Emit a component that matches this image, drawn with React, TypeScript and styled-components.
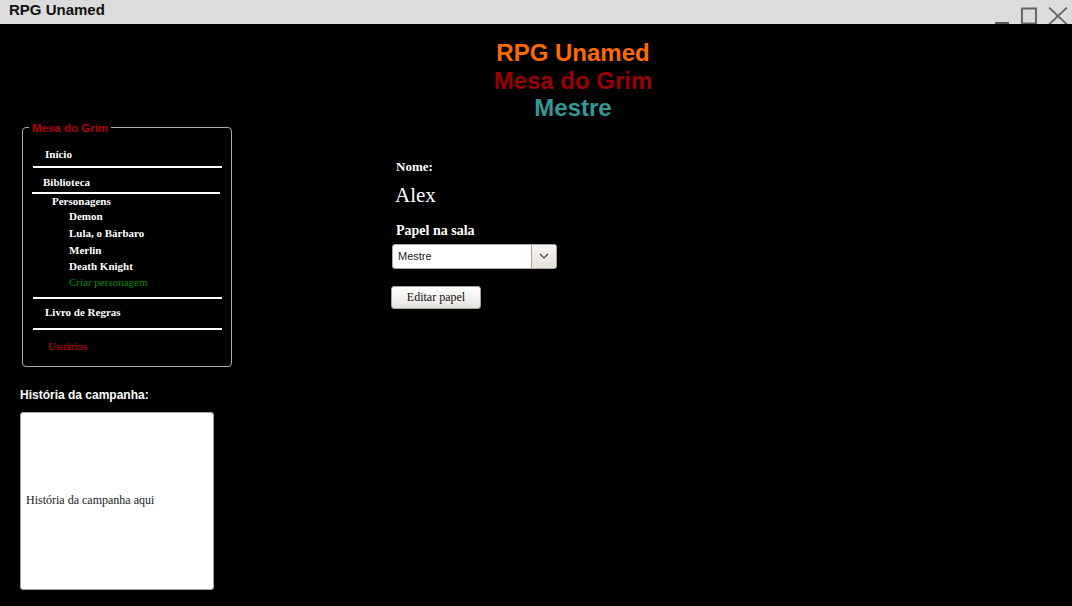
import React from "react";
import styled, { createGlobalStyle } from "styled-components";

const GlobalStyle = createGlobalStyle`
  html, body { margin: 0; padding: 0; background: #000; }
  body { font-family: "Liberation Serif", serif; }
  * { box-sizing: border-box; }
`;

const Window = styled.div`
  width: 1072px;
  height: 606px;
  display: flex;
  flex-direction: column;
  background: #000;
  overflow: hidden;
`;

const TitleBar = styled.div`
  height: 24px;
  flex: none;
  background: #dcdcdc;
  display: flex;
  align-items: flex-start;
  justify-content: space-between;
  overflow: hidden;
`;

const TitleText = styled.span`
  font-family: "Liberation Sans", Arial, sans-serif;
  font-weight: bold;
  font-size: 15px;
  line-height: 18px;
  color: #111;
  padding-left: 9px;
  padding-top: 1px;
`;

const Controls = styled.div`
  display: flex;
  align-items: flex-start;
  gap: 10px;
  padding-top: 7px;
  padding-right: 4px;
`;

const Body = styled.div`
  flex: 1;
  display: flex;
  flex-direction: column;
`;

const Header = styled.header`
  padding: 15px 0 0 74px;
  text-align: center;
  font-family: "Liberation Sans", Arial, sans-serif;
  font-weight: bold;
  font-size: 24px;
  line-height: 27.5px;
`;

const HeaderLine = styled.div<{ $color: string }>`
  color: ${(p) => p.$color};
`;

const Columns = styled.div`
  display: flex;
  align-items: flex-start;
`;

const Sidebar = styled.aside`
  width: 396px;
  padding-left: 20px;
  display: flex;
  flex-direction: column;
`;

const MenuBox = styled.fieldset`
  margin: 0 0 0 2px;
  width: 210px;
  border: 1px solid #b0aca4;
  border-radius: 4px;
  padding: 7.5px 8px 3.5px 9px;
  min-width: 0;
`;

const Legend = styled.legend`
  font-family: "Liberation Sans", Arial, sans-serif;
  font-weight: 700;
  font-size: 11.5px;
  color: #b00000;
  padding: 0 3px;
  margin-left: -3px;
  line-height: 12px;
`;

const MenuList = styled.div`
  display: flex;
  flex-direction: column;
`;

const MenuItem = styled.div<{ $indent: number; $color?: string; $bold?: boolean; $h: number; $pt?: number }>`
  font-size: 11px;
  font-weight: ${(p) => (p.$bold === false ? "normal" : "bold")};
  color: ${(p) => p.$color || "#fff"};
  padding-left: ${(p) => p.$indent}px;
  padding-top: ${(p) => p.$pt || 0}px;
  height: ${(p) => p.$h}px;
  display: flex;
  align-items: center;
  white-space: nowrap;
`;

const Rule = styled.div<{ $left: number; $w: number }>`
  height: 2px;
  background: #fff;
  margin-left: ${(p) => p.$left}px;
  width: ${(p) => p.$w}px;
`;

const Spacer = styled.div<{ $h: number }>`
  height: ${(p) => p.$h}px;
`;

const StoryLabel = styled.div`
  font-family: "Liberation Sans", Arial, sans-serif;
  font-weight: bold;
  font-size: 12px;
  color: #fff;
  margin-top: 21px;
  line-height: 14px;
`;

const StoryBox = styled.div`
  margin-top: 10px;
  width: 194px;
  height: 178px;
  background: #fff;
  border: 1px solid #a9a49c;
  border-radius: 3px;
  display: flex;
  align-items: center;
  padding-left: 5px;
  font-size: 12px;
  color: #222;
`;

const Content = styled.main`
  padding-top: 37px;
  display: flex;
  flex-direction: column;
  align-items: flex-start;
`;

const FieldLabel = styled.div<{ $size: number; $mt?: number }>`
  font-weight: bold;
  font-size: ${(p) => p.$size}px;
  color: #fff;
  line-height: 16px;
  margin-top: ${(p) => p.$mt || 0}px;
`;

const NameValue = styled.div`
  font-size: 21px;
  color: #fff;
  margin: 8px 0 0 -1px;
  line-height: 24px;
`;

const Select = styled.div`
  margin-top: 5px;
  margin-left: -4px;
  width: 165px;
  height: 25px;
  background: #fff;
  border: 1px solid #aaa59d;
  border-radius: 3px;
  display: flex;
  overflow: hidden;
`;

const SelectText = styled.div`
  flex: 1;
  font-family: "Liberation Sans", Arial, sans-serif;
  font-size: 11px;
  color: #222;
  display: flex;
  align-items: center;
  padding-left: 5px;
`;

const SelectArrow = styled.div`
  width: 25px;
  border-left: 1px solid #aaa59d;
  background: linear-gradient(#f6f4f0, #e6e2dc);
  display: flex;
  align-items: center;
  justify-content: center;
`;

const Button = styled.button`
  margin-top: 17px;
  margin-left: -5px;
  width: 90px;
  height: 23px;
  border: 1px solid #a8a39b;
  border-radius: 3px;
  background: linear-gradient(#ffffff, #e6e4e0);
  font-family: "Liberation Serif", serif;
  font-size: 12px;
  color: #111;
  padding: 0;
  cursor: pointer;
`;

type Entry =
  | { kind: "item"; t: string; indent: number; h: number; color?: string; bold?: boolean; pt?: number }
  | { kind: "rule"; left: number; w: number }
  | { kind: "spacer"; h: number };

const menu: Entry[] = [
  { kind: "item", t: "Início", indent: 13, h: 25 },
  { kind: "rule", left: 1, w: 189 },
  { kind: "item", t: "Biblioteca", indent: 11, h: 24, pt: 3 },
  { kind: "rule", left: 0, w: 188 },
  { kind: "item", t: "Personagens", indent: 20, h: 14 },
  { kind: "item", t: "Demon", indent: 37, h: 16 },
  { kind: "item", t: "Lula, o Bárbaro", indent: 37, h: 17 },
  { kind: "item", t: "Merlin", indent: 37, h: 17 },
  { kind: "item", t: "Death Knight", indent: 37, h: 16 },
  { kind: "item", t: "Criar personagem", indent: 37, h: 16, color: "#009000", bold: false },
  { kind: "spacer", h: 7 },
  { kind: "rule", left: 1, w: 189 },
  { kind: "item", t: "Livro de Regras", indent: 13, h: 26 },
  { kind: "spacer", h: 3 },
  { kind: "rule", left: 1, w: 189 },
  { kind: "item", t: "Usuários", indent: 16, h: 32, color: "#d00000", bold: false },
];

export default function App() {
  return (
    <Window>
      <GlobalStyle />
      <TitleBar>
        <TitleText>RPG Unamed</TitleText>
        <Controls>
          <svg width="16" height="20" viewBox="0 0 16 20">
            <rect x="1" y="15" width="14" height="3" fill="#555" />
          </svg>
          <svg width="18" height="20" viewBox="0 0 18 20">
            <rect x="2" y="1.5" width="14" height="15" fill="none" stroke="#666" strokeWidth="2" />
          </svg>
          <svg width="20" height="20" viewBox="0 0 20 20">
            <path d="M1 0.5 L19 17.5 M19 0.5 L1 17.5" stroke="#666" strokeWidth="1.8" />
          </svg>
        </Controls>
      </TitleBar>
      <Body>
        <Header>
          <HeaderLine $color="#ff6a00">RPG Unamed</HeaderLine>
          <HeaderLine $color="#990000">Mesa do Grim</HeaderLine>
          <HeaderLine $color="#339999">Mestre</HeaderLine>
        </Header>
        <Columns>
          <Sidebar>
            <MenuBox>
              <Legend>Mesa do Grim</Legend>
              <MenuList>
                {menu.map((m, i) =>
                  m.kind === "rule" ? (
                    <Rule key={i} $left={m.left} $w={m.w} />
                  ) : m.kind === "spacer" ? (
                    <Spacer key={i} $h={m.h} />
                  ) : (
                    <MenuItem key={i} $indent={m.indent} $h={m.h} $color={m.color} $bold={m.bold} $pt={m.pt}>
                      {m.t}
                    </MenuItem>
                  )
                )}
              </MenuList>
            </MenuBox>
            <StoryLabel>História da campanha:</StoryLabel>
            <StoryBox>História da campanha aqui</StoryBox>
          </Sidebar>
          <Content>
            <FieldLabel $size={13}>Nome:</FieldLabel>
            <NameValue>Alex</NameValue>
            <FieldLabel $size={14} $mt={16}>Papel na sala</FieldLabel>
            <Select>
              <SelectText>Mestre</SelectText>
              <SelectArrow>
                <svg width="10" height="6" viewBox="0 0 10 6">
                  <path d="M1 1 L5 5 L9 1" fill="none" stroke="#444" strokeWidth="1.2" />
                </svg>
              </SelectArrow>
            </Select>
            <Button>Editar papel</Button>
          </Content>
        </Columns>
      </Body>
    </Window>
  );
}
